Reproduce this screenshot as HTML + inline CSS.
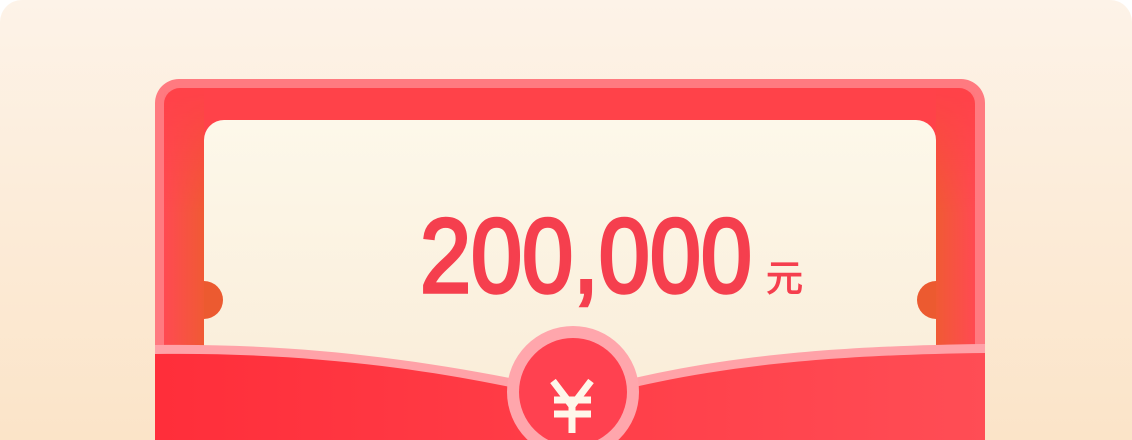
<!DOCTYPE html>
<html><head><meta charset="utf-8"><style>
html,body{margin:0;padding:0;background:#fff;width:1132px;height:440px;overflow:hidden;}
.wrap{width:1132px;height:440px;border-radius:22px 22px 0 0;overflow:hidden;background:linear-gradient(180deg,#fdf3e8 0%,#fbe4c8 100%);position:relative;}
svg{position:absolute;left:0;top:0;display:block;}
</style></head><body><div class="wrap">
<svg width="1132" height="440" viewBox="0 0 1132 440">
<defs>
<linearGradient id="lb" x1="0" y1="0" x2="1" y2="0">
<stop offset="0" stop-color="#ff4a52"/><stop offset="1" stop-color="#f05a34"/>
</linearGradient>
<linearGradient id="rb" x1="0" y1="0" x2="1" y2="0">
<stop offset="0" stop-color="#f05a34"/><stop offset="1" stop-color="#ff4a52"/>
</linearGradient>
<linearGradient id="fade" x1="0" y1="0" x2="0" y2="1">
<stop offset="0" stop-color="#fff" stop-opacity="0"/><stop offset="0.35" stop-color="#fff" stop-opacity="1"/><stop offset="1" stop-color="#fff" stop-opacity="1"/>
</linearGradient>
<mask id="m" maskUnits="userSpaceOnUse" x="0" y="0" width="1132" height="440">
<rect x="0" y="90" width="1132" height="350" fill="url(#fade)"/>
</mask>
<linearGradient id="card" gradientUnits="userSpaceOnUse" x1="0" y1="120" x2="0" y2="440">
<stop offset="0" stop-color="#fdf8ea"/><stop offset="1" stop-color="#f9ebd6"/>
</linearGradient>
<linearGradient id="flap" x1="0" y1="0" x2="1" y2="0">
<stop offset="0" stop-color="#ff2e3a"/><stop offset="1" stop-color="#ff4d55"/>
</linearGradient>
</defs>
<path d="M155 440 V103 a24 24 0 0 1 24 -24 H961 a24 24 0 0 1 24 24 V440 Z" fill="#ff7a80"/>
<path d="M164 440 V104 a16 16 0 0 1 16 -16 H959 a16 16 0 0 1 16 16 V440 Z" fill="#ff4249"/>
<g mask="url(#m)">
<rect x="164" y="90" width="40" height="350" fill="url(#lb)"/>
<rect x="936" y="90" width="39" height="350" fill="url(#rb)"/>
</g>
<path d="M204 440 V140 a20 20 0 0 1 20 -20 H916 a20 20 0 0 1 20 20 V440 Z" fill="url(#card)"/>
<path d="M204 281 a19 19 0 0 1 0 38 Z" fill="#ec5a30"/>
<path d="M936 281 a19 19 0 0 0 0 38 Z" fill="#ec5a30"/>
<text x="586" y="292" text-anchor="middle" font-family="Liberation Sans, sans-serif" font-size="105" fill="#f53f4e" stroke="#f53f4e" stroke-width="3.5" transform="translate(586 0) scale(0.875 1) translate(-586 0)">200,000</text>
<text x="766" y="291" font-family="Liberation Sans, 'Noto Sans CJK SC', sans-serif" font-size="37" fill="#f53f4e" stroke="#f53f4e" stroke-width="1">元</text>
<path d="M155 345 C300 343 420 360 520 380 L626 380 C720 358 820 346 985 344 L985 440 L155 440 Z" fill="#ffa2a8"/>
<path d="M155 354 C300 352 420 368 520 389 L626 389 C720 367 820 355 985 353 L985 440 L155 440 Z" fill="url(#flap)"/>
<circle cx="573" cy="392" r="66" fill="#ffa6ac"/>
<circle cx="573" cy="392" r="54" fill="#ff4150"/>
<g stroke="#fff6ea" stroke-width="7" fill="none">
<path d="M553 381 L572 406 L591 381"/>
<path d="M572 406 V433"/>
<path d="M554 400 H591 M554 414 H591"/>
</g>
</svg>
</div></body></html>
